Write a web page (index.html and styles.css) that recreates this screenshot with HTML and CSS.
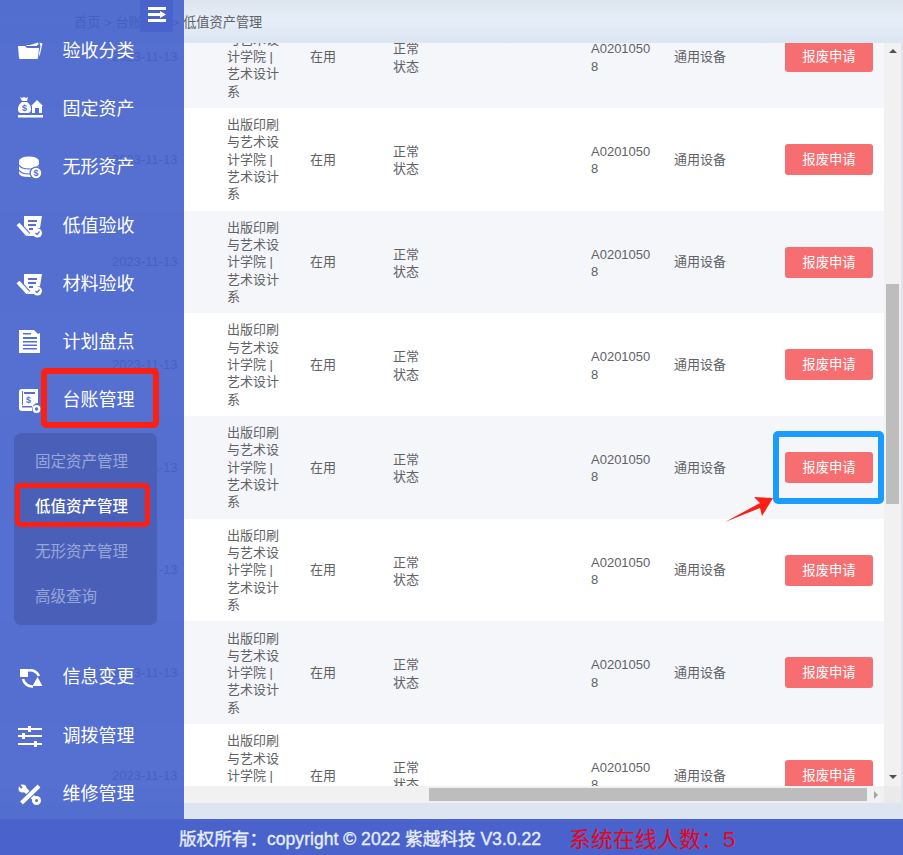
FILE: index.html
```html
<!DOCTYPE html>
<html lang="zh">
<head>
<meta charset="utf-8">
<title>低值资产管理</title>
<link rel="stylesheet" href="styles.css">
</head>
<body>
<div class="app">
  <div class="work">
    <header class="crumbs">首页 &gt; 台账管理 &gt; 低值资产管理</header>
    <div class="scroller">
      <div class="scroll-main">
        <div class="viewport">
          <div class="rows">
            <div class="row"><span>2023-11-13</span><span class="cell-wrap">出版印刷与艺术设计学院 | 艺术设计系</span><span>在用</span><span class="cell-state">正常状态</span><span class="cell-code">A02010508</span><span>通用设备</span><button class="scrap">报废申请</button></div>
            <div class="row"><span>2023-11-13</span><span class="cell-wrap">出版印刷与艺术设计学院 | 艺术设计系</span><span>在用</span><span class="cell-state">正常状态</span><span class="cell-code">A02010508</span><span>通用设备</span><button class="scrap">报废申请</button></div>
            <div class="row"><span>2023-11-13</span><span class="cell-wrap">出版印刷与艺术设计学院 | 艺术设计系</span><span>在用</span><span class="cell-state">正常状态</span><span class="cell-code">A02010508</span><span>通用设备</span><button class="scrap">报废申请</button></div>
            <div class="row"><span>2023-11-13</span><span class="cell-wrap">出版印刷与艺术设计学院 | 艺术设计系</span><span>在用</span><span class="cell-state">正常状态</span><span class="cell-code">A02010508</span><span>通用设备</span><button class="scrap">报废申请</button></div>
            <div class="row"><span>2023-11-13</span><span class="cell-wrap">出版印刷与艺术设计学院 | 艺术设计系</span><span>在用</span><span class="cell-state">正常状态</span><span class="cell-code">A02010508</span><span>通用设备</span><button class="scrap">报废申请</button></div>
            <div class="row"><span>2023-11-13</span><span class="cell-wrap">出版印刷与艺术设计学院 | 艺术设计系</span><span>在用</span><span class="cell-state">正常状态</span><span class="cell-code">A02010508</span><span>通用设备</span><button class="scrap">报废申请</button></div>
            <div class="row"><span>2023-11-13</span><span class="cell-wrap">出版印刷与艺术设计学院 | 艺术设计系</span><span>在用</span><span class="cell-state">正常状态</span><span class="cell-code">A02010508</span><span>通用设备</span><button class="scrap">报废申请</button></div>
            <div class="row"><span>2023-11-13</span><span class="cell-wrap">出版印刷与艺术设计学院 | 艺术设计系</span><span>在用</span><span class="cell-state">正常状态</span><span class="cell-code">A02010508</span><span>通用设备</span><button class="scrap">报废申请</button></div>
          </div>
        </div>
        <div class="vbar">
          <i class="tri tri-up"></i>
          <div class="vthumb"></div>
          <i class="tri tri-down"></i>
        </div>
      </div>
      <div class="hbar-row">
        <div class="hbar"><div class="hthumb"></div><i class="tri tri-right"></i></div>
        <div class="corner"></div>
      </div>
    </div>
  </div>

  <footer class="footer">
    <span class="copyright">版权所有：copyright © 2022 紫越科技 V3.0.22</span>
    <span class="online">系统在线人数：5</span>
  </footer>

  <aside class="sidebar">
    <button class="toggle" aria-label="折叠菜单">
      <svg width="26" height="20" viewBox="0 0 26 20"><path d="M4 1h18v3H4zM4 7h12V5l6 3.500-6 3.500v-2H4zM4 13h18v3H4z" fill="#fff"/></svg>
    </button>
    <nav class="menu">
      <a class="item"><svg class="ico" viewBox="0 0 28 28"><path d="M14 9l8-2.500.5 2.500zM23.500 6.500l3 1-3 13-.5-3 1.500-7zM2 10h7l2 2h12l-1 10q0 1-1 1H4q-1 0-1-1z" fill="#fff"/><path d="M10 10l1-1h10v1z" fill="#fff"/></svg><span class="label">验收分类</span></a>
      <a class="item"><svg class="ico" viewBox="0 0 28 28"><path d="M4 3l2 1 2-1 2 1 2-1-1 4H6zM6 8h5q4 3 4 7 0 4-3 4H5q-3 0-3-4 0-4 4-7zM21 6l6 6h-1v7H16v-7h-1zM2 21h25v2.500H2z" fill="#fff"/><path d="M19 14h4v5h-4z" fill="#5570d0"/><text class="ico-s" x="6" y="17">$</text></svg><span class="label">固定资产</span></a>
      <a class="item"><svg class="ico" viewBox="0 0 28 28"><path d="M3 9v12q0 4 10 4t10-4V9z" fill="#fff"/><ellipse cx="13" cy="9" rx="10" ry="4.500" fill="#fff"/><path d="M3 13q2 4 10 4t10-4M3 18q2 4 10 4t10-4" stroke="#5570d0" stroke-width="1.200" fill="none"/><circle cx="20" cy="21" r="6.500" fill="#5570d0"/><circle cx="20" cy="21" r="5.200" fill="#fff"/><text class="ico-s" x="17.500" y="24">$</text></svg><span class="label">无形资产</span></a>
      <a class="item"><svg class="ico" viewBox="0 0 28 28"><path d="M8 5h18l-2 12q-5 0-6 8H10q-2 0-2-2z" fill="#fff"/><path d="M12 9h9v2h-9zM12 13h8v2h-8zM13 17h4v2h-4z" fill="#5570d0"/><path d="M2 13l10 11" stroke="#5570d0" stroke-width="6"/><path d="M2 13l10 11" stroke="#fff" stroke-width="4"/><circle cx="21.500" cy="22" r="4.500" fill="#fff"/><path d="M19.500 22l1.500 1.500 2.500-3" stroke="#5570d0" stroke-width="1.200" fill="none"/></svg><span class="label">低值验收</span></a>
      <a class="item"><svg class="ico" viewBox="0 0 28 28"><path d="M8 5h18l-2 12q-5 0-6 8H10q-2 0-2-2z" fill="#fff"/><path d="M12 9h9v2h-9zM12 13h8v2h-8zM13 17h4v2h-4z" fill="#5570d0"/><path d="M2 13l10 11" stroke="#5570d0" stroke-width="6"/><path d="M2 13l10 11" stroke="#fff" stroke-width="4"/><circle cx="21.500" cy="22" r="4.500" fill="#fff"/><path d="M19.500 22l1.500 1.500 2.500-3" stroke="#5570d0" stroke-width="1.200" fill="none"/></svg><span class="label">材料验收</span></a>
      <a class="item"><svg class="ico" viewBox="0 0 28 28"><path d="M3 3h15l4 4 2-1v20H3z" fill="#fff"/><path d="M7 10h14v2H7zM7 14h14v1.500H7zM7 17.500h14V19H7zM7 21h14v1.500H7zM7 6h8v1.500H7z" fill="#5570d0"/></svg><span class="label">计划盘点</span></a>
      <a class="item"><svg class="ico" viewBox="0 0 28 28"><path d="M6 4h16v14q-6 0-6 8H6q-3 0-3-3V7q0-3 3-3z" fill="#fff"/><path d="M8 7h11v2H8zM6 21h10v1.500H6zM6 6v14h1V6z" fill="#5570d0"/><text class="ico-s" x="10" y="18">$</text><circle cx="20.500" cy="24" r="2.800" fill="none" stroke="#fff" stroke-width="2.200"/></svg><span class="label">台账管理</span></a>
      <div class="submenu">
        <a class="sub">固定资产管理</a>
        <a class="sub sub-active">低值资产管理</a>
        <a class="sub">无形资产管理</a>
        <a class="sub">高级查询</a>
      </div>
      <a class="item"><svg class="ico" viewBox="0 0 28 28"><path d="M4 7h8v8H4z" fill="#fff"/><path d="M12 8.500A9.500 9.500 0 0 1 23 14M7 17A9.500 9.500 0 0 0 17 24.500" stroke="#fff" stroke-width="2.600" fill="none"/><path d="M21.500 15l5 9h-10z" fill="#fff"/></svg><span class="label">信息变更</span></a>
      <a class="item"><svg class="ico" viewBox="0 0 28 28"><path d="M2 7h24v2H2zM2 14h24v2H2zM2 22h24v2H2z" fill="#fff"/><path d="M12 5h3v6h-3zM6 12h3v6H6zM18 20h3v6h-3z" fill="#fff"/></svg><span class="label">调拨管理</span></a>
      <a class="item"><svg class="ico" viewBox="0 0 28 28"><path d="M7 9l14 13" stroke="#fff" stroke-width="4.500"/><circle cx="6.500" cy="9.500" r="4" fill="#fff"/><path d="M2 5l4 4" stroke="#5570d0" stroke-width="2"/><circle cx="20.500" cy="21.500" r="4.500" fill="#fff"/><circle cx="20.500" cy="21.500" r="1.500" fill="#5570d0"/><path d="M23 7L5.500 24" stroke="#5570d0" stroke-width="6"/><path d="M23 7L5.500 24" stroke="#fff" stroke-width="4"/></svg><span class="label">维修管理</span></a>
    </nav>
  </aside>

  <div class="mark mark-red-menu"></div>
  <div class="mark mark-red-sub"></div>
  <div class="mark mark-blue"></div>
  <svg class="mark-arrow" width="50" height="28" viewBox="0 0 50 28"><path d="M0 27L35 8 29 2 48 3 37 21 35 13z" fill="#fb1f14"/></svg>
</div>
</body>
</html>
```
FILE: styles.css
```css
* { box-sizing: border-box; }
html, body { margin: 0; height: 100%; overflow: hidden; }
body {
  font-family: "Liberation Sans", "Noto Sans CJK SC", sans-serif;
  color: #606266;
}
.app {
  position: relative;
  width: 903px;
  height: 855px;
  display: flex;
  flex-direction: column;
  background: #dce5f0;
}
.work { flex: 1; display: flex; flex-direction: column; min-height: 0; }
.crumbs {
  height: 43px;
  padding-left: 74px;
  display: flex;
  align-items: center;
  font-size: 13.2px;
  white-space: pre;
  background: linear-gradient(180deg, #dde4ed 0%, #e5eef9 45%, #dce6f2 100%);
}
.scroller { width: 901px; display: flex; flex-direction: column; }
.scroll-main { height: 743px; display: flex; }
.viewport { flex: 1; overflow: hidden; background: #fff; }
.rows { margin-top: -37.7px; }
.row {
  height: 102.7px;
  display: grid;
  grid-template-columns: 112px 115px 83px 83px 198px 83px 111px 88px;
  align-items: center;
  font-size: 13px;
  line-height: 17.3px;
  background: #fff;
}
.row:nth-child(odd) { background: #f4f6fa; }
.row > span:first-child { grid-column: 2; }
.cell-wrap { width: 60px; word-break: break-all; }
.cell-code { width: 60px; word-break: break-all; padding-top: 2px; }
.cell-state { width: 30px; padding-top: 2px; }
.scrap {
  width: 88px;
  height: 31px;
  padding: 0 0 2px;
  border: 0;
  border-radius: 3px;
  background: #f76e70;
  color: #fff;
  font: 13.33px "Liberation Sans", "Noto Sans CJK SC", sans-serif;
}
.vbar {
  width: 17px;
  display: flex;
  flex-direction: column;
  align-items: center;
  background: #f1f1f1;
}
.vthumb { width: 13px; height: 220px; margin-top: 231px; margin-bottom: auto; background: #bdbdbd; }
.tri { display: block; width: 0; height: 0; border-style: solid; border-color: transparent; }
.tri-up { margin-top: 6px; border-width: 0 4px 4px; border-bottom-color: #505050; }
.tri-down { margin-bottom: 7px; border-width: 4px 4px 0; border-top-color: #505050; }
.tri-right { margin-left: 7px; border-width: 4px 0 4px 4px; border-left-color: #a3a3a3; }
.hbar-row { height: 17px; display: flex; }
.hbar { flex: 1; display: flex; align-items: center; background: #f1f1f1; }
.hthumb { width: 438px; height: 13px; margin-left: 429px; background: #bdbdbd; }
.corner { width: 17px; background: #eaeaea; }
.footer {
  height: 36px;
  padding-left: 179px;
  display: flex;
  align-items: center;
  background: #4a63cc;
  position: relative;
  z-index: 2;
}
.copyright {
  width: 390px;
  font-size: 17.6px;
  color: #e6edfb;
  -webkit-text-stroke: 0.35px #e6edfb;
  white-space: nowrap;
}
.online { font-size: 22px; color: #e8041a; white-space: nowrap; }
.sidebar {
  position: absolute;
  left: 0;
  top: 0;
  bottom: 36px;
  width: 184px;
  background: rgba(67, 97, 203, 0.9);
  overflow: hidden;
}
.toggle {
  position: absolute;
  left: 140px;
  top: 0;
  width: 33px;
  height: 32px;
  padding: 0;
  border: 0;
  background: #4a63cc;
  display: flex;
  align-items: center;
  justify-content: center;
}
.menu { display: flex; flex-direction: column; padding-top: 21px; }
.item {
  height: 58.2px;
  display: flex;
  align-items: center;
  flex: none;
  gap: 19px;
  padding-left: 16px;
  font-size: 18px;
  color: #fff;
}
.label { margin-left: -0.5px; padding-bottom: 2px; }
.ico { width: 28px; height: 28px; flex: none; }
.ico-s { font-size: 9px; font-weight: 700; fill: #5570d0; }
.submenu {
  margin: 5px 27px 22px 14px;
  padding: 5px 0 7px;
  border-radius: 7px;
  background: #4a60b8;
}
.sub {
  height: 45px;
  padding: 0 0 2px 21px;
  display: flex;
  align-items: center;
  font-size: 15.5px;
  color: #98a6d8;
}
.sub-active { color: #fff; font-weight: 500; }
.mark { position: absolute; z-index: 3; border-style: solid; border-radius: 5px; }
.mark-red-menu { left: 41px; top: 368px; width: 118px; height: 60px; border-width: 6px; border-color: #fb1f14; }
.mark-red-sub { left: 15px; top: 483px; width: 135px; height: 44px; border-width: 5px; border-color: #fb1f14; }
.mark-blue { left: 773px; top: 431px; width: 111px; height: 73px; border-width: 6px; border-color: #1a9cff; }
.mark-arrow { position: absolute; z-index: 3; left: 725px; top: 495px; }
```
